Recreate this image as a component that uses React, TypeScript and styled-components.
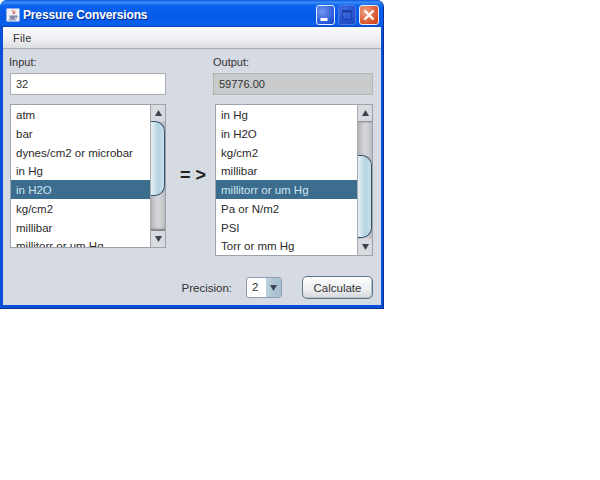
import React from "react";
import styled, { createGlobalStyle } from "styled-components";

const Global = createGlobalStyle`
  html, body { margin: 0; padding: 0; background: #fff; }
  body { font-family: "Liberation Sans", Arial, sans-serif; }
`;

const Win = styled.div`
  width: 384px;
  height: 309px;
  box-sizing: border-box;
  background: #0a4fd8;
  border-radius: 7px 7px 0 0;
  display: flex;
  flex-direction: column;
  padding: 0 2px 3px 3px;
  border-bottom: 1px solid #0a2f90;
  border-right: 1px solid #0a2f90;
`;

const TitleBar = styled.div`
  height: 27px;
  box-sizing: border-box;
  flex: none;
  margin: 0 -2px 0 -3px;
  padding: 3px 4px 0 6px;
  border-radius: 7px 7px 0 0;
  background: linear-gradient(180deg, #0a58e0 0%, #3d8cf8 8%, #0a62ee 22%, #0758e6 70%, #0a62f0 90%, #0547c4 100%);
  display: flex;
  align-items: center;
  gap: 3px;
`;

const TitleText = styled.span`
  flex: 1;
  color: #fff;
  font-size: 12px;
  font-weight: bold;
  letter-spacing: -0.15px;
  text-shadow: 1px 1px 0 #0a2f90;
`;

const btnWidth = { min: 19, max: 18, close: 20 };

const WinBtn = styled.div<{ $kind: "min" | "max" | "close" }>`
  width: ${p => btnWidth[p.$kind]}px;
  height: 20px;
  box-sizing: border-box;
  border-radius: 3px;
  border: 1px solid ${p => (p.$kind === "max" ? "#4f78e0" : "#e6eefc")};
  background: ${p =>
    p.$kind === "close"
      ? "radial-gradient(circle at 30% 30%, #f0a080, #d8552c 70%, #c23c18)"
      : p.$kind === "min"
      ? "radial-gradient(circle at 30% 30%, #6f98ee, #2a5ad8 70%, #1c46c0)"
      : "radial-gradient(circle at 30% 30%, #3f70e0, #2450c8 70%, #1c46b8)"};
  display: flex;
  align-items: center;
  justify-content: center;
`;

const Menu = styled.div`
  height: 22px;
  box-sizing: border-box;
  flex: none;
  background: linear-gradient(180deg, #fbfbfc 0%, #eeeff2 60%, #dcdde1 100%);
  border-bottom: 1px solid #a9abb0;
  display: flex;
  align-items: center;
  padding-left: 10px;
  font-size: 11px;
  color: #333;
  letter-spacing: 0.2px;
`;

const Content = styled.div`
  flex: 1;
  background: #d6dae2;
  padding: 7px 8px 6px 7px;
  display: flex;
  flex-direction: column;
`;

const Columns = styled.div`
  display: flex;
`;

const Col = styled.div<{ $w: number }>`
  width: ${p => p.$w}px;
  display: flex;
  flex-direction: column;
`;

const Label = styled.div<{ $ml: number }>`
  font-size: 11px;
  line-height: 13px;
  height: 13px;
  margin-left: ${p => p.$ml}px;
  color: #333;
`;

const Field = styled.div<{ $disabled?: boolean }>`
  height: 22px;
  box-sizing: border-box;
  margin-top: 4px;
  border: 1px solid ${p => (p.$disabled ? "#b4b6b6" : "#a8aaaf")};
  background: ${p => (p.$disabled ? "#c8cacb" : "#fff")};
  font-size: 11px;
  color: #333;
  display: flex;
  align-items: center;
  padding-left: 5px;
`;

const ListBox = styled.div<{ $h: number; $ml?: number }>`
  height: ${p => p.$h}px;
  box-sizing: border-box;
  margin-top: 9px;
  margin-left: ${p => p.$ml ?? 0}px;
  border: 1px solid #9fa3ab;
  background: #fff;
  display: flex;
  overflow: hidden;
`;

const Items = styled.div`
  flex: 1;
  min-width: 0;
  overflow: hidden;
`;

const Item = styled.div<{ $sel?: boolean }>`
  height: 18.75px;
  line-height: 20px;
  padding-left: 5px;
  font-size: 11.5px;
  white-space: nowrap;
  color: ${p => (p.$sel ? "#cfe6f0" : "#2a2a2a")};
  background: ${p => (p.$sel ? "#3c6c8e" : "transparent")};
`;

const Scroll = styled.div`
  width: 14px;
  flex: none;
  background: linear-gradient(90deg, #b4b6ba, #d6d8dc 50%, #bcbec2);
  border-left: 1px solid #a8aab0;
  display: flex;
  flex-direction: column;
  align-items: stretch;
`;

const ArrowBtn = styled.div`
  height: 16px;
  flex: none;
  background: #d8dae0;
  display: flex;
  align-items: center;
  justify-content: center;
`;

const Track = styled.div<{ $capTop?: boolean }>`
  flex: 1;
  display: flex;
  flex-direction: column;
  box-shadow: inset 0 ${p => (p.$capTop ? "2px" : "-3px")} 2px -1px #7c7e82;
`;

const Thumb = styled.div<{ $top: number; $h: number }>`
  margin-top: ${p => p.$top}px;
  height: ${p => p.$h}px;
  flex: none;
  box-sizing: border-box;
  background: linear-gradient(90deg, #e6f0f4, #b4d4e2 55%, #c8dfe8);
  border: 1px solid #35506a;
  border-left: none;
  border-radius: 0 10px 10px 0;
`;

const Middle = styled.div`
  width: 47px;
  flex: none;
  box-sizing: border-box;
  padding: 108px 0 0 14px;
  font-size: 18px;
  font-weight: bold;
  color: #222;
  line-height: 22px;
  white-space: nowrap;
  height: 0;
`;

const Footer = styled.div`
  margin-top: auto;
  display: flex;
  justify-content: flex-end;
  align-items: center;
`;

const PrecisionLabel = styled.span`
  font-size: 11.5px;
  color: #333;
  margin-right: 14px;
`;

const Combo = styled.div`
  width: 36px;
  height: 21px;
  box-sizing: border-box;
  margin-right: 20px;
  border: 1px solid #8f9ab0;
  border-radius: 3px;
  background: #fff;
  display: flex;
  overflow: hidden;
`;

const ComboValue = styled.span`
  flex: 1;
  font-size: 11.5px;
  color: #333;
  line-height: 19px;
  padding-left: 5px;
`;

const ComboArrow = styled.div`
  width: 15px;
  background: linear-gradient(90deg, #bcd0dc, #a4bece);
  display: flex;
  align-items: center;
  justify-content: center;
`;

const CalcBtn = styled.div`
  width: 71px;
  height: 23px;
  box-sizing: border-box;
  border: 1.5px solid #5f7388;
  border-radius: 5px;
  background: linear-gradient(180deg, #fdfdfd, #eceef0 60%, #d4d6dc);
  box-shadow: inset -1px -1px 0 #b8c0c8;
  font-size: 11.5px;
  color: #333;
  display: flex;
  align-items: center;
  justify-content: center;
`;

const Up = () => (
  <svg width="9" height="8" viewBox="0 0 9 8"><path d="M4.5 1 L8 7 L1 7 Z" fill="#3a4550" /></svg>
);
const Down = () => (
  <svg width="9" height="8" viewBox="0 0 9 8"><path d="M1 1 L8 1 L4.5 7 Z" fill="#3a4550" /></svg>
);

const JavaIcon = () => (
  <svg width="14" height="14" viewBox="0 0 16 16">
    <rect x="0.5" y="0.5" width="15" height="15" rx="1.5" fill="#f2f2f6" stroke="#8fb0ea" />
    <path d="M8 2 C6 4 10 5 8 7 M10 3 C9 4.5 11 5 9.5 7" stroke="#c44" fill="none" />
    <path d="M4 8.5 H11 V10.5 C11 12 9.5 12.5 7.5 12.5 C5.5 12.5 4 12 4 10.5 Z" fill="#7d8aa8" />
    <path d="M11 9 H12.5 V10.5 H11 M3 13.5 H12" stroke="#5a6a8a" fill="none" />
  </svg>
);

const leftItems = ["atm", "bar", "dynes/cm2 or microbar", "in Hg", "in H2O", "kg/cm2", "millibar", "millitorr or um Hg"];
const rightItems = ["in Hg", "in H2O", "kg/cm2", "millibar", "millitorr or um Hg", "Pa or N/m2", "PSI", "Torr or mm Hg"];

const List = ({ items, sel, h, ml, top, th, capTop }: { items: string[]; sel: number; h: number; ml?: number; top: number; th: number; capTop?: boolean }) => (
  <ListBox $h={h} $ml={ml}>
    <Items>
      {items.map((t, i) => (
        <Item key={t} $sel={i === sel}>{t}</Item>
      ))}
    </Items>
    <Scroll>
      <ArrowBtn><Up /></ArrowBtn>
      <Track $capTop={capTop}><Thumb $top={top} $h={th} /></Track>
      <ArrowBtn><Down /></ArrowBtn>
    </Scroll>
  </ListBox>
);

export default function App() {
  return (
    <>
      <Global />
      <Win>
        <TitleBar>
          <JavaIcon />
          <TitleText>Pressure Conversions</TitleText>
          <WinBtn $kind="min">
            <svg width="17" height="18" viewBox="0 0 17 18"><rect x="3.5" y="12" width="7" height="3" fill="#fff" /></svg>
          </WinBtn>
          <WinBtn $kind="max">
            <svg width="16" height="18" viewBox="0 0 16 18"><rect x="3.5" y="4.5" width="9" height="9" fill="none" stroke="#1c3ea8" /><rect x="3.5" y="4.5" width="9" height="2" fill="#1c3ea8" /></svg>
          </WinBtn>
          <WinBtn $kind="close">
            <svg width="18" height="18" viewBox="0 0 18 18"><path d="M4.5 4.5 L13.5 13.5 M13.5 4.5 L4.5 13.5" stroke="#fff" strokeWidth="2.4" /></svg>
          </WinBtn>
        </TitleBar>
        <Menu>File</Menu>
        <Content>
          <Columns>
            <Col $w={156}>
              <Label $ml={-1}>Input:</Label>
              <Field>32</Field>
              <List items={leftItems} sel={4} h={144} top={0} th={75} />
            </Col>
            <Middle>= &gt;</Middle>
            <Col $w={160}>
              <Label $ml={0}>Output:</Label>
              <Field $disabled>59776.00</Field>
              <List items={rightItems} sel={4} h={152} ml={2} top={34} th={83} capTop />
            </Col>
          </Columns>
          <Footer>
            <PrecisionLabel>Precision:</PrecisionLabel>
            <Combo>
              <ComboValue>2</ComboValue>
              <ComboArrow><Down /></ComboArrow>
            </Combo>
            <CalcBtn>Calculate</CalcBtn>
          </Footer>
        </Content>
      </Win>
    </>
  );
}
